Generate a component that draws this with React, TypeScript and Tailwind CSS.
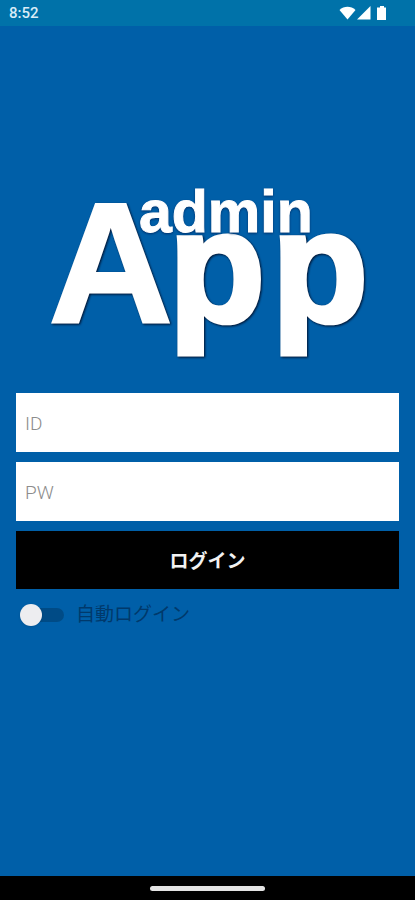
import { useState } from 'react'

function StatusBar() {
  return (
    <header className="flex h-[26px] items-center justify-between bg-[#0072a9] pr-7 pl-[9px] text-white">
      <span className="pt-px font-[Roboto,sans-serif] text-[15px] font-medium text-[#d9ecf7]">8:52</span>
      <div className="flex items-center gap-px">
        <svg width="17" height="14" viewBox="0 0 17 14" fill="currentColor" aria-hidden="true">
          <path d="M0.5 4C5 -0.3 12 -0.3 16.5 4L8.5 13.5Z" />
        </svg>
        <svg width="14" height="14" viewBox="0 0 14 14" fill="currentColor" aria-hidden="true">
          <path d="M13.5 0V13.5H0Z" />
        </svg>
        <svg width="15" height="14" viewBox="0 0 15 14" fill="currentColor" aria-hidden="true">
          <path d="M8 0H12V1.5H14V14H5V1.5H8Z" />
        </svg>
      </div>
    </header>
  )
}

function Logo() {
  return (
    <svg
      viewBox="0 0 320 172"
      className="w-[320px] max-w-full overflow-visible font-[Liberation_Sans,Arial,sans-serif] font-bold"
      fill="#fff"
      stroke="#fff"
      role="img"
      aria-label="admin App"
    >
      <g className="drop-shadow-[1px_1px_1px_#00102c]">
        <text x="1" y="136" fontSize="171" strokeWidth="3">
          A
        </text>
        <text x="121 224" y="135" fontSize="157" strokeWidth="5">
          pp
        </text>
      </g>
      <text x="91" y="46" fontSize="59" strokeWidth="1" className="drop-shadow-[0px_1px_1px_#00306a]">
        admin
      </text>
    </svg>
  )
}

const fieldClass =
  'h-[59px] w-full bg-white px-[9px] pt-[2px] font-[Roboto,sans-serif] text-[19px] font-light text-gray-800 outline-none placeholder:text-[#8c8c8c]'

export default function App() {
  const [id, setId] = useState('')
  const [password, setPassword] = useState('')
  const [autoLogin, setAutoLogin] = useState(false)

  return (
    <div className="flex min-h-screen flex-col bg-[#005fa8] font-[Roboto,Noto_Sans_CJK_JP,sans-serif]">
      <StatusBar />

      <main className="flex flex-1 flex-col px-4 pt-[160px]">
        <div className="flex justify-center">
          <Logo />
        </div>

        <form className="mt-[35px] flex flex-col gap-[10px]" onSubmit={(e) => e.preventDefault()}>
          <input
            type="text"
            aria-label="ID"
            placeholder="ID"
            value={id}
            onChange={(e) => setId(e.target.value)}
            className={fieldClass}
          />
          <input
            type="password"
            aria-label="PW"
            placeholder="PW"
            value={password}
            onChange={(e) => setPassword(e.target.value)}
            className={fieldClass}
          />
          <button type="submit" className="h-[58px] w-full bg-black pt-1 text-[19px] font-bold text-[#f2f2f2]">
            ログイン
          </button>

          <label className="flex items-center gap-3 self-start pt-[2px] pl-1 text-[19px] leading-7 text-[#00396b]">
            <input
              type="checkbox"
              checked={autoLogin}
              onChange={(e) => setAutoLogin(e.target.checked)}
              className="peer sr-only"
            />
            <span className="flex h-[14px] w-11 items-center rounded-full bg-linear-to-r from-transparent from-20% to-[#004b86] to-20% peer-checked:justify-end">
              <span className="size-[22px] rounded-full bg-[#ededf0] shadow-sm" />
            </span>
            自動ログイン
          </label>
        </form>
      </main>

      <footer className="flex h-6 items-center justify-center bg-black">
        <div className="h-[5px] w-[115px] rounded-full bg-[#e4e4e4]" />
      </footer>
    </div>
  )
}
